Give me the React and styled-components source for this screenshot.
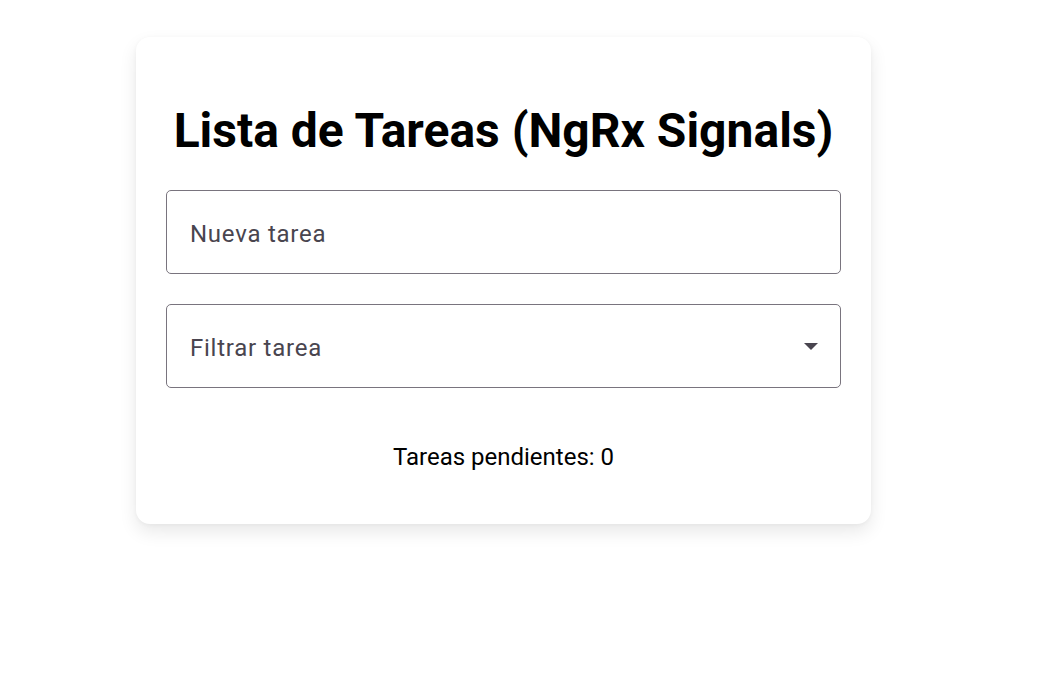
import React from 'react';
import styled, { createGlobalStyle } from 'styled-components';

const GlobalStyle = createGlobalStyle`
  html, body {
    margin: 0;
    padding: 0;
    background: #ffffff;
    font-family: Roboto, 'Liberation Sans', sans-serif;
  }
`;

const Page = styled.div`
  padding: 37px 0 40px 136px;
`;

const Card = styled.div`
  width: 735px;
  box-sizing: border-box;
  padding: 66px 30px 53px;
  background: #ffffff;
  border-radius: 14px;
  box-shadow: 0 8px 18px rgba(0, 0, 0, 0.09), 0 1px 4px rgba(0, 0, 0, 0.04);
  display: flex;
  flex-direction: column;
`;

const Title = styled.h1`
  margin: 0 0 31px;
  font-size: 48px;
  line-height: 56px;
  font-weight: 700;
  text-align: center;
  color: #000000;
`;

const Fields = styled.div`
  display: flex;
  flex-direction: column;
  gap: 30px;
`;

const Field = styled.label`
  display: flex;
  align-items: center;
  height: 84px;
  box-sizing: border-box;
  padding: 0 23px;
  border: 1px solid #79747e;
  border-radius: 5px;
  cursor: ${({ $select }) => ($select ? 'pointer' : 'text')};
`;

const Placeholder = styled.span`
  flex: 1;
  margin-top: 4px;
  font-size: 24px;
  letter-spacing: 0.75px;
  color: #49454f;
`;

const Arrow = styled.span`
  width: 0;
  height: 0;
  margin-right: -1px;
  border-left: 7.5px solid transparent;
  border-right: 7.5px solid transparent;
  border-top: 7.5px solid #49454f;
`;

const Pending = styled.p`
  margin: 55px 0 0;
  text-align: center;
  font-size: 24px;
  line-height: 28px;
  color: #000000;
`;

const App = () => (
  <>
    <GlobalStyle />
    <Page>
      <Card>
        <Title>Lista de Tareas (NgRx Signals)</Title>
        <Fields>
          <Field>
            <Placeholder>Nueva tarea</Placeholder>
          </Field>
          <Field $select>
            <Placeholder>Filtrar tarea</Placeholder>
            <Arrow />
          </Field>
        </Fields>
        <Pending>Tareas pendientes: 0</Pending>
      </Card>
    </Page>
  </>
);

export default App;
